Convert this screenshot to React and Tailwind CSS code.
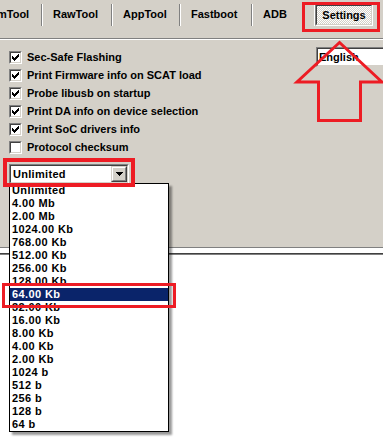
import React from "react";

function Sep() {
  return <div className="mt-[4px] h-[22px] w-[2px] shrink-0 border-l border-l-[#808080] border-r border-r-white" />;
}

function Tab({ w, label, extra = "" }) {
  return (
    <div className={`shrink-0 pt-[7px] pl-[10px] leading-[14px] whitespace-nowrap ${w} ${extra}`}>{label}</div>
  );
}

function Check({ checked }) {
  return (
    <div className="h-[13px] w-[13px] shrink-0 border border-t-[#808080] border-l-[#808080] border-b-white border-r-white">
      <div className="h-[11px] w-[11px] border border-t-[#404040] border-l-[#404040] border-b-[#d4d0c8] border-r-[#d4d0c8] bg-white">
        {checked && (
          <svg width="9" height="9" viewBox="0 0 9 9" shapeRendering="crispEdges">
            <path
              d="M1 3h1v3h-1zM2 4h1v3h-1zM3 5h1v3h-1zM4 4h1v3h-1zM5 3h1v3h-1zM6 2h1v3h-1zM7 1h1v3h-1z"
              fill="#000"
            />
          </svg>
        )}
      </div>
    </div>
  );
}

function Row({ checked, label }) {
  return (
    <div className="flex h-[18px] items-center gap-[5px] whitespace-nowrap">
      <Check checked={checked} />
      <span className="leading-[14px]">{label}</span>
    </div>
  );
}

const items = [
  "Unlimited",
  "4.00 Mb",
  "2.00 Mb",
  "1024.00 Kb",
  "768.00 Kb",
  "512.00 Kb",
  "256.00 Kb",
  "128.00 Kb",
  "64.00 Kb",
  "32.00 Kb",
  "16.00 Kb",
  "8.00 Kb",
  "4.00 Kb",
  "2.00 Kb",
  "1024 b",
  "512 b",
  "256 b",
  "128 b",
  "64 b",
];

export default function App() {
  return (
    <div className="relative flex h-[438px] w-[383px] flex-col overflow-hidden bg-white font-['Liberation_Sans',Arial,sans-serif] text-[11px] font-bold text-black">
      {/* tab strip */}
      <div className="flex h-[38px] shrink-0 items-start bg-[#d4d0c8]">
        <div className="ml-[-3px] w-[44px] shrink-0 pt-[7px] leading-[14px] whitespace-nowrap">mTool</div>
        <Sep />
        <Tab w="w-[68px]" label="RawTool" />
        <Sep />
        <Tab w="w-[66px]" label="AppTool" />
        <Sep />
        <Tab w="w-[70px]" label="Fastboot" />
        <Sep />
        <Tab w="w-[58px]" label="ADB" />
        <div className="mt-[4px] h-[22px] w-[4px] shrink-0 border-r border-r-white" />
        <div className="mt-[4px] flex h-[22px] w-[58px] shrink-0 items-center justify-center border border-t-[#808080] border-l-[#808080] border-b-white border-r-white">
          <div className="flex h-full w-full items-center justify-center border border-t-[#404040] border-l-[#404040] border-b-[#d4d0c8] border-r-[#d4d0c8] bg-[image:repeating-conic-gradient(#ffffff_0_25%,#d4d0c8_0_50%)] bg-[length:2px_2px] leading-[14px]">
            Settings
          </div>
        </div>
      </div>
      <div className="h-[1px] shrink-0 bg-[#808080]" />
      <div className="h-[1px] shrink-0 bg-white" />

      {/* panel */}
      <div className="flex h-[207px] shrink-0 bg-[#d4d0c8]">
        <div className="flex w-[316px] shrink-0 flex-col pl-[9px] pt-[8px]">
          <Row checked label="Sec-Safe Flashing" />
          <Row checked label="Print Firmware info on SCAT load" />
          <Row checked label="Probe libusb on startup" />
          <Row checked label="Print DA info on device selection" />
          <Row checked label="Print SoC drivers info" />
          <Row checked={false} label="Protocol checksum" />
          <div className="mt-[8px] flex h-[20px] w-[120px] border border-t-[#808080] border-l-[#808080] border-b-white border-r-white">
            <div className="flex h-full w-full border border-t-[#404040] border-l-[#404040] border-b-[#d4d0c8] border-r-[#d4d0c8] bg-white">
              <div className="flex-1 pl-[2px] leading-[16px] tracking-[0.3px]">Unlimited</div>
              <div className="flex h-[16px] w-[16px] items-center justify-center border border-t-[#d4d0c8] border-l-[#d4d0c8] border-b-[#404040] border-r-[#404040] bg-[#d4d0c8]">
                <div className="flex h-full w-full items-center justify-center border border-t-white border-l-white border-b-[#808080] border-r-[#808080]">
                  <svg width="7" height="4" viewBox="0 0 7 4" shapeRendering="crispEdges">
                    <path d="M0 0h7v1h-7zM1 1h5v1h-5zM2 2h3v1h-3zM3 3h1v1h-1z" fill="#000" />
                  </svg>
                </div>
              </div>
            </div>
          </div>
        </div>
        <div className="shrink-0 pt-[7px]">
          <div className="h-[20px] w-[80px] border border-t-[#808080] border-l-[#808080] border-b-[#d4d0c8] border-r-white">
            <div className="h-full w-full border border-t-[#404040] border-l-[#404040] border-b-[#d4d0c8] border-r-[#d4d0c8] bg-white pl-[1px] leading-[16px]">
              English
            </div>
          </div>
        </div>
      </div>
      <div className="h-[1px] shrink-0 bg-[#808080]" />
      <div className="h-[5px] shrink-0 bg-white" />
      <div className="h-[1px] shrink-0 bg-[#404040]" />
      <div className="h-[1px] shrink-0 bg-[#808080]" />
      <div className="flex-1 bg-white" />

      {/* dropdown list */}
      <div className="absolute left-[9px] top-[183px] w-[160px] border border-black bg-white shadow-[3px_3px_2px_rgba(0,0,0,0.4)]">
        {items.map((t, i) => (
          <div
            key={i}
            className={
              i === 8
                ? "h-[13px] bg-[#0a246a] pl-[2px] leading-[13px] tracking-[0.4px] text-white"
                : "h-[13px] pl-[2px] leading-[13px] tracking-[0.4px]"
            }
          >
            {t}
          </div>
        ))}
      </div>

      {/* annotations */}
      <div className="pointer-events-none absolute left-[302px] top-[2px] h-[30px] w-[78px] border-[3px] border-[#ed1c24]" />
      <div className="pointer-events-none absolute left-[3px] top-[158px] h-[29px] w-[132px] border-[4px] border-[#ed1c24]" />
      <div className="pointer-events-none absolute left-[2px] top-[283px] h-[25px] w-[174px] border-[3px] border-[#ed1c24]" />
      <svg className="pointer-events-none absolute left-0 top-0" width="383" height="438">
        <polygon
          points="339.5,42.5 297,82 318.5,82 318.5,120.5 360.5,120.5 360.5,82 382,82"
          fill="none"
          stroke="#ed1c24"
          strokeWidth="3"
          strokeLinejoin="miter"
        />
      </svg>
    </div>
  );
}
